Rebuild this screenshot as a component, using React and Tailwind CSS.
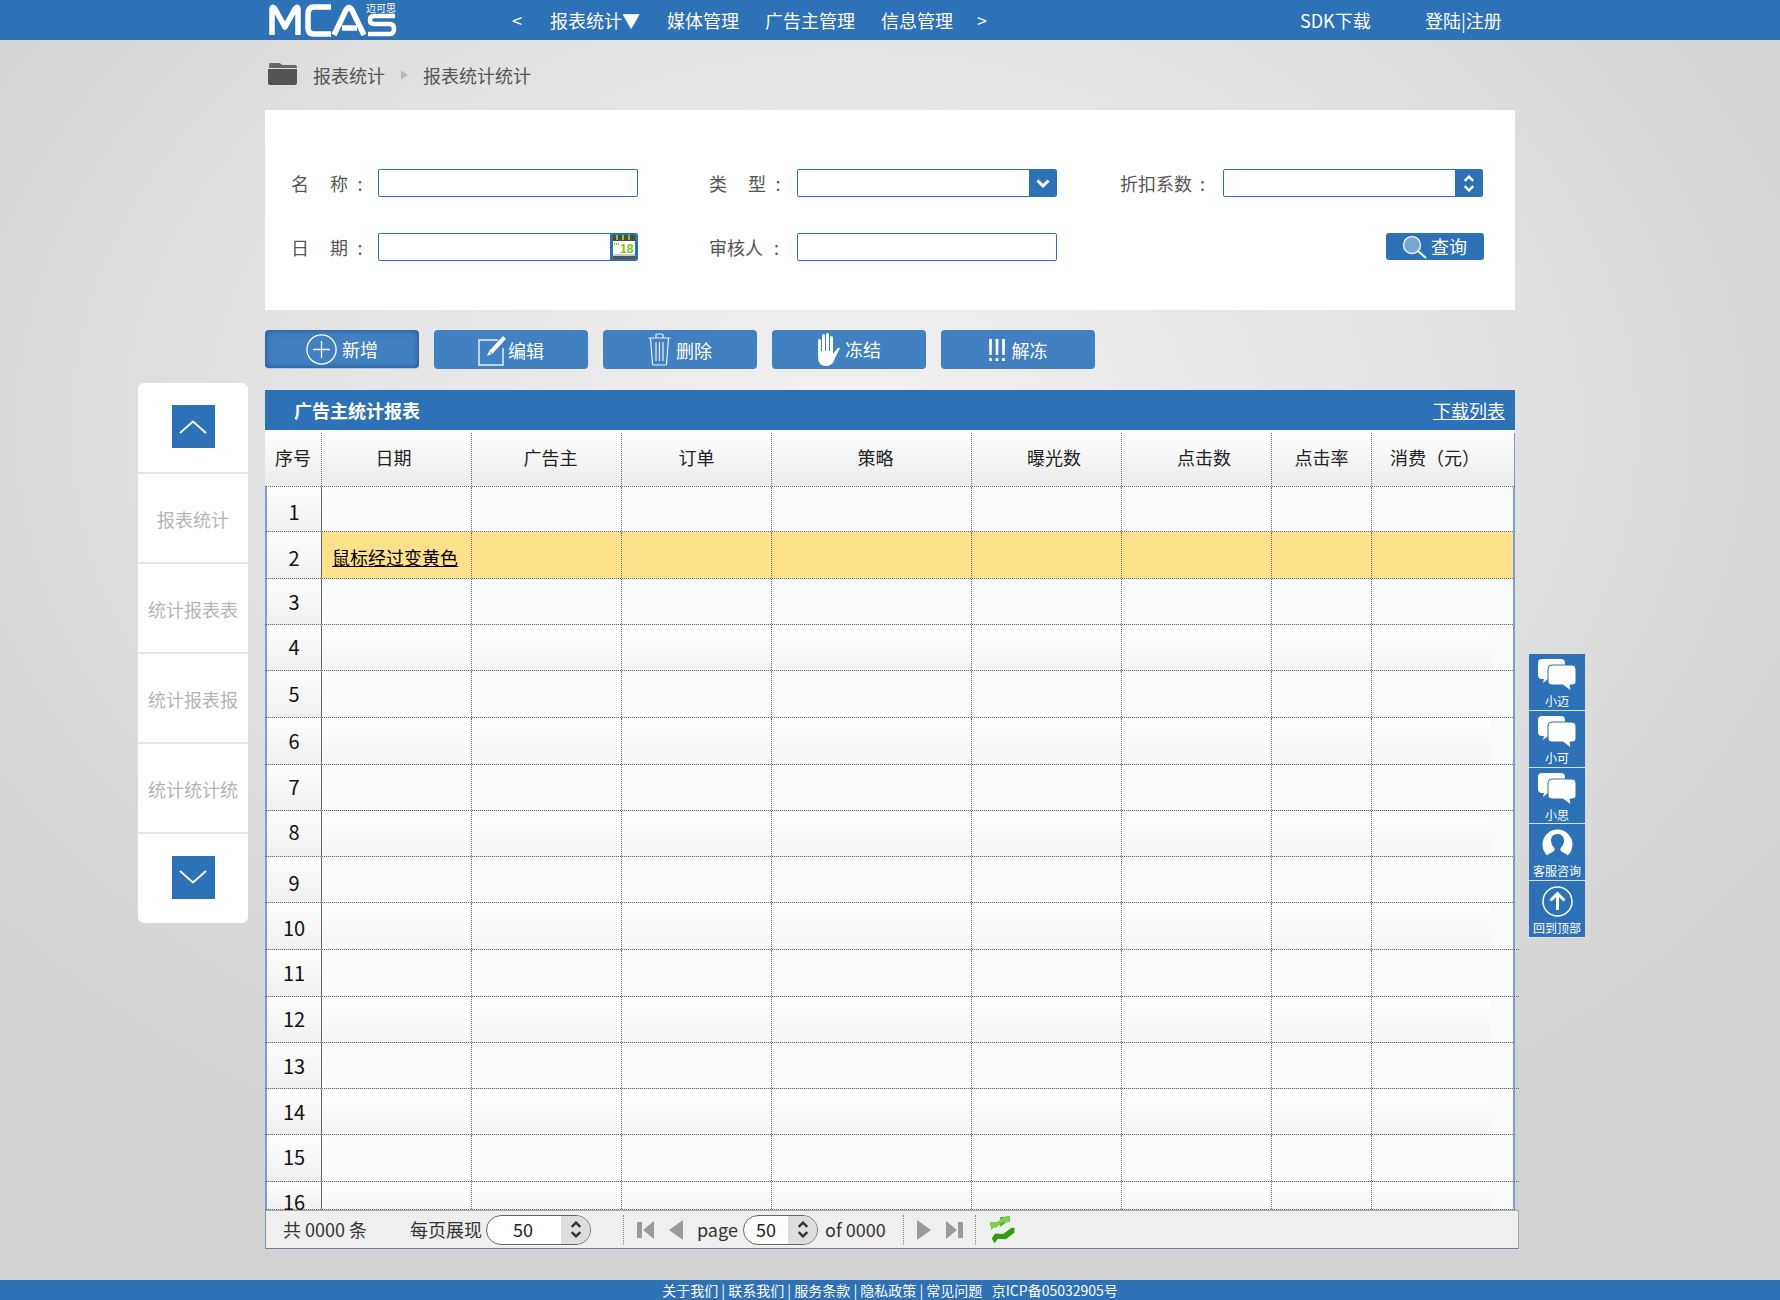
import React from "react";

const FONT = "font-['Noto_Sans_CJK_SC','Noto_Sans',sans-serif]";

const navItems = [
  ["<", "w-[38px]"],
  ["报表统计▼", "w-[117px]"],
  ["媒体管理", "w-[98px]"],
  ["广告主管理", "w-[116px]"],
  ["信息管理", "w-[96px]"],
  [">", "w-[323px]"],
  ["SDK下载", "w-[125px]"],
  ["登陆|注册", ""],
];

const columns = [
  { label: "序号", w: "w-[57px]", head: "" },
  { label: "日期", w: "w-[150px]", head: "pr-[6px]" },
  { label: "广告主", w: "w-[150px]", head: "pl-[8px]" },
  { label: "订单", w: "w-[150px]", head: "" },
  { label: "策略", w: "w-[200px]", head: "pl-[8px]" },
  { label: "曝光数", w: "w-[150px]", head: "pl-[15px]" },
  { label: "点击数", w: "w-[150px]", head: "pl-[15px]" },
  { label: "点击率", w: "w-[100px]", head: "" },
  { label: "消费（元）", w: "w-[143px]", head: "pr-[16px]" },
];

// row heights and digit offsets follow the uneven rows of the picture
const rows = [
  { n: 1, h: "h-[45px]", pt: "pt-[13px]" },
  { n: 2, h: "h-[47px]", pt: "pt-[14px]" },
  { n: 3, h: "h-[46px]", pt: "pt-[11px]" },
  { n: 4, h: "h-[46px]", pt: "pt-[10px]" },
  { n: 5, h: "h-[47px]", pt: "pt-[11px]" },
  { n: 6, h: "h-[47px]", pt: "pt-[11px]" },
  { n: 7, h: "h-[46px]", pt: "pt-[10px]" },
  { n: 8, h: "h-[46px]", pt: "pt-[9px]" },
  { n: 9, h: "h-[46px]", pt: "pt-[14px]" },
  { n: 10, h: "h-[47px]", pt: "pt-[13px]", wide: true },
  { n: 11, h: "h-[47px]", pt: "pt-[11px]", wide: true },
  { n: 12, h: "h-[46px]", pt: "pt-[10px]" },
  { n: 13, h: "h-[46px]", pt: "pt-[11px]", wide: true },
  { n: 14, h: "h-[46px]", pt: "pt-[11px]" },
  { n: 15, h: "h-[47px]", pt: "pt-[10px]", wide: true },
  { n: 16, h: "h-[28px]", pt: "pt-[8px]" },
];

function Chevron({ up, className }) {
  return (
    <svg viewBox="0 0 14 9" className={className} fill="none" stroke="currentColor" strokeWidth="3">
      <path d={up ? "M1.5 7.5 7 2l5.5 5.5" : "M1.5 1.5 7 7l5.5-5.5"} />
    </svg>
  );
}

function UpDown({ className }) {
  return (
    <div className={"flex flex-col items-center gap-[3px] " + className}>
      <Chevron up className="w-[12px] h-[7px]" />
      <Chevron className="w-[12px] h-[7px]" />
    </div>
  );
}

function Logo() {
  return (
    <div className="relative w-[129px] h-[34px]">
      <svg viewBox="0 0 129 34" className="w-[129px] h-[34px]" fill="none" stroke="#fff" strokeWidth="5.5" strokeLinejoin="round">
        <path d="M4 32V7Q4 2 7 6L17 24 27 6Q30 2 30 7V32" />
        <path d="M63 4H46Q40 4 40 11V25Q40 31 46 31H63" />
        <path d="M66 32 78 7Q81 2 84 7L96 32M74 25H89" />
        <path d="M127 13H106Q102 13 102 17 102 21 106 21H122Q126 21 126 26 126 31 122 31H100" strokeWidth="4.5" />
      </svg>
      <span className="absolute left-[98px] top-[-1px] text-[10px] leading-[11px] text-white">迈可思</span>
    </div>
  );
}

function Header() {
  return (
    <header className="h-[40px] bg-[#2d71b7] flex items-center pl-[268px] text-white text-[18px]">
      <Logo />
      <div className="flex items-center ml-[115px]">
        {navItems.map(([text, w]) => (
          <span key={text} className={w}>{text}</span>
        ))}
      </div>
    </header>
  );
}

function Breadcrumb() {
  return (
    <div className="h-[70px] flex items-center pl-[3px] text-[18px] text-[#555]">
      <svg viewBox="0 0 29 24" className="w-[29px] h-[24px] -mt-[4px]">
        <path d="M1 4q0-2 2-2h8q1 0 2 1l1 1h13q2 0 2 2v1H1z" fill="#666" />
        <path d="M0 8h29v14q0 2-2 2H2q-2 0-2-2z" fill="#555" />
      </svg>
      <span className="ml-[16px]">报表统计</span>
      <span className="ml-[16px] w-0 h-0 border-y-[5px] border-y-transparent border-l-[7px] border-l-[#bbb]" />
      <span className="ml-[15px]">报表统计统计</span>
    </div>
  );
}

function CalendarIcon() {
  return (
    <svg viewBox="0 0 22 24" className="w-[22px] h-[24px]">
      <rect x="0" y="0" width="22" height="24" rx="1" fill="#fff" />
      <rect x="0" y="0" width="22" height="6" fill="#4c4c3a" />
      <path d="M3 0h2v5H3zM9 0h2v5H9zM15 0h2v5h-2z" fill="#8ac926" />
      <rect x="0" y="21" width="22" height="3" fill="#555" />
      <rect x="0" y="19" width="22" height="2" fill="#ccc" />
      <path d="M1 8h1v2H1zM3 8h1v2H3zM5 8h1v2H5z" fill="#7ac70c" />
      <text x="7" y="18" fontSize="12" fontWeight="700" fill="#74c80a" fontFamily="Liberation Sans">18</text>
    </svg>
  );
}

function Field({ w, slot }) {
  return (
    <div className={w + " h-[28px] border border-[#2d71b7] rounded-[2px] bg-white flex justify-end overflow-hidden"}>
      {slot && <div className="w-[27px] bg-[#2d71b7] text-white flex items-center justify-center">{slot}</div>}
    </div>
  );
}

function Label({ text, w, colon }) {
  return (
    <span className={w + " text-[18px] text-[#555] whitespace-pre"}>
      {text}
      <span className={colon}>:</span>
    </span>
  );
}

function FilterForm() {
  return (
    <div className="h-[200px] bg-white pt-[59px] pl-[26px] flex flex-col gap-[36px]">
      <div className="flex items-center">
        <Label text="名　称" w="w-[87px] tracking-[1.5px]" colon="ml-[8px]" />
        <Field w="w-[260px]" />
        <div className="w-[71px]" />
        <Label text="类　型" w="w-[88px] tracking-[1.5px]" colon="ml-[8px]" />
        <Field w="w-[260px]" slot={<Chevron className="w-[14px] h-[9px]" />} />
        <div className="w-[63px]" />
        <Label text="折扣系数" w="w-[103px]" colon="ml-[8px]" />
        <Field w="w-[260px]" slot={<UpDown />} />
      </div>
      <div className="flex items-center">
        <Label text="日　期" w="w-[87px] tracking-[1.5px]" colon="ml-[8px]" />
        <Field w="w-[260px]" slot={<CalendarIcon />} />
        <div className="w-[71px]" />
        <Label text="审核人" w="w-[88px]" colon="ml-[11px]" />
        <Field w="w-[260px]" />
        <button className="ml-[329px] w-[98px] h-[27px] -mt-[1px] rounded-[3px] bg-[#2d71b7] text-white text-[18px] flex items-center pl-[16px] gap-[3px]">
          <svg viewBox="0 0 26 24" className="w-[26px] h-[24px]">
            <circle cx="10" cy="10" r="8.5" fill="#79a5d4" stroke="#e8f0f8" strokeWidth="1.5" />
            <path d="M16 16l8 7" stroke="#fff" strokeWidth="2" />
          </svg>
          查询
        </button>
      </div>
    </div>
  );
}

function ActionButton({ active, icon, text, gap, pt }) {
  return (
    <button
      className={
        "w-[154px] h-[39px] rounded-[4px] bg-[#4180c1] text-white text-[18px] flex items-center justify-center " +
        gap + " " +
        (active ? "shadow-[inset_0_0_6px_#1f4f8f] border-b border-white/60" : "")
      }
    >
      {icon}
      <span className={pt}>{text}</span>
    </button>
  );
}

function Toolbar() {
  return (
    <div className="mt-[20px] flex gap-[15px]">
      <ActionButton
        active
        text="新增"
        gap="gap-[5px]"
        pt="pt-[1px]"
        icon={
          <svg viewBox="0 0 31 31" className="w-[31px] h-[31px]" fill="none" stroke="#fff" strokeWidth="1.3">
            <circle cx="15.5" cy="15.5" r="14.6" />
            <path d="M15.5 7v17M7 15.5h17" />
          </svg>
        }
      />
      <ActionButton
        text="编辑"
        gap="gap-0"
        pt="pt-[1px]"
        icon={
          <svg viewBox="0 0 30 32" className="w-[30px] h-[32px]" fill="none" stroke="#e8f0f8">
            <path d="M20 6H1v25h24V14" strokeWidth="1.5" />
            <path d="M9 22l2-5L25 2l3 3-14 15z" fill="#fff" stroke="none" />
            <path d="M11.5 17.5l3 3" stroke="#4180c1" />
          </svg>
        }
      />
      <ActionButton
        text="删除"
        gap="gap-[5px]"
        pt="pt-[1px]"
        icon={
          <svg viewBox="0 0 23 33" className="w-[23px] h-[33px]" fill="none" stroke="#e8f0f8" strokeWidth="1.2">
            <path d="M.5 5h22M8 5V2q0-1 1-1h5q1 0 1 1v3M2.5 5l2 26q0 1 1 1h12q1 0 1-1l2-26M8 9v19M11.5 9v19M15 9v19" />
          </svg>
        }
      />
      <ActionButton
        text="冻结"
        gap="gap-[5px]"
        pt="-mt-[1px]"
        icon={
          <svg viewBox="0 0 23 33" className="w-[23px] h-[33px]" fill="#fff">
            <rect x="1" y="6" width="3" height="16" rx="1.5" />
            <rect x="5" y="1" width="3" height="20" rx="1.5" />
            <rect x="9" y="0" width="3" height="21" rx="1.5" />
            <rect x="13" y="3" width="3" height="18" rx="1.5" />
            <path d="M1 18h15v3l4-5q2-2 3-1l-5 10q-2 8-9 8-8 0-8-9z" />
          </svg>
        }
      />
      <ActionButton
        text="解冻"
        gap="gap-[7px]"
        pt="pt-[1px]"
        icon={
          <svg viewBox="0 0 16 22" className="w-[16px] h-[22px]" fill="#fff">
            <path d="M0 0h3l-.3 16H.4zM6.500 0h3l-.3 16H6.800zM13 0h3l-.3 16h-2.300zM.2 19h2.600v3H.2zM6.700 19h2.600v3H6.700zM13.200 19h2.600v3h-2.600z" />
          </svg>
        }
      />
    </div>
  );
}

function TableHead() {
  return (
    <div className="flex h-[57px] w-[1250px] bg-gradient-to-b from-white to-[#ebebeb] border-b border-dotted border-[#666]">
      {columns.map((c, i) => (
        <div
          key={c.label}
          className={
            c.w + " mt-[3px] flex items-center justify-center pb-[5px] text-[18px] text-[#222] border-dotted border-[#666] " +
            c.head + " " +
            (i < 8 ? "border-r" : "border-r border-solid border-r-[#7a9fd6]")
          }
        >
          {c.label}
        </div>
      ))}
    </div>
  );
}

function TableRow({ row }) {
  const hover = row.n === 2;
  const even = row.n % 2 === 0 && !hover;
  return (
    <div className={row.h + " flex border-b border-dotted border-[#666] " + (row.wide ? "w-[1254px]" : "w-[1250px]")}>
      {columns.map((c, i) => {
        if (i === 0) {
          return (
            <div
              key={c.label}
              className={c.w + " " + row.pt + " text-center text-[20px] leading-[24px] text-[#111] bg-gradient-to-b from-white to-[#efefef] border-l-2 border-l-[#7a9fd6] border-r border-r-[#666] border-r-dotted"}
            >
              {row.n}
            </div>
          );
        }
        return (
          <div
            key={c.label}
            className={
              c.w + " border-r " +
              (i < 8 ? "border-dotted border-[#666] " : "border-r-2 border-solid border-[#7a9fd6] ") +
              (hover ? "bg-[#fee18a] " : even && i < 8 ? "bg-gradient-to-b from-white to-[#f6f6f6] " : "bg-[#fafbfd] ")
            }
          >
            {hover && i === 1 && (
              <a href="#" className="block ml-[10px] mt-[13px] text-[18px] leading-[24px] text-black underline whitespace-nowrap">
                鼠标经过变黄色
              </a>
            )}
            {even && i === 8 && <div className="w-[119px] h-full bg-gradient-to-b from-white to-[#f6f6f6]" />}
          </div>
        );
      })}
    </div>
  );
}

function DataTable() {
  return (
    <div className="mt-[21px] w-[1250px]">
      <div className="h-[40px] bg-[#2d71b7] flex items-center justify-between pl-[29px] pr-[10px] text-white text-[18px]">
        <span className="font-bold">广告主统计报表</span>
        <a href="#" className="underline">下载列表</a>
      </div>
      <div className="h-[780px] w-[1254px] overflow-hidden">
        <TableHead />
        {rows.map((row) => (
          <TableRow key={row.n} row={row} />
        ))}
      </div>
    </div>
  );
}

function Spinner({ value, w, valueW }) {
  return (
    <div className={w + " h-[30px] rounded-full border border-[#666] bg-white overflow-hidden flex text-[18px] text-[#222]"}>
      <span className={valueW + " flex-1 flex items-center justify-center"}>{value}</span>
      <span className="w-[29px] bg-[#dedede] flex items-center justify-center text-[#333]">
        <UpDown />
      </span>
    </div>
  );
}

function Pager() {
  return (
    <div className="w-[1254px] h-[39px] bg-[#efefef] border border-[#a9a9a9] border-b-[#74808e] border-l-[#8296ad] flex items-center pl-[17px] text-[18px] text-[#333]">
      <span className="w-[127px]">共 0000 条</span>
      <span className="w-[76px]">每页展现</span>
      <Spinner value="50" w="w-[105px]" valueW="pr-[2px]" />
      <span className="ml-[32px] h-[30px] border-l border-dotted border-[#888]" />
      <svg viewBox="0 0 17 30" className="ml-[13px] w-[17px] h-[30px]" fill="#9a9a9a">
        <path d="M0 7h5v16H0zM17 6v18L6 15z" />
      </svg>
      <svg viewBox="0 0 14 30" className="ml-[15px] w-[14px] h-[30px]" fill="#9a9a9a">
        <path d="M14 5v20L0 15z" />
      </svg>
      <span className="ml-[14px] w-[46px]">page</span>
      <Spinner value="50" w="w-[75px]" valueW="" />
      <span className="ml-[7px] w-[65px]">of 0000</span>
      <span className="ml-[13px] h-[30px] border-l border-dotted border-[#888]" />
      <svg viewBox="0 0 14 30" className="ml-[13px] w-[14px] h-[30px]" fill="#9a9a9a">
        <path d="M0 5v20l14-10z" />
      </svg>
      <svg viewBox="0 0 17 30" className="ml-[15px] w-[17px] h-[30px]" fill="#9a9a9a">
        <path d="M12 7h5v16h-5zM0 6v18l11-9z" />
      </svg>
      <span className="ml-[12px] h-[30px] border-l border-dotted border-[#888]" />
      <svg viewBox="0 0 26 28" className="ml-[13px] w-[26px] h-[28px]">
        <path d="M2 14Q2 6 11 6V1l3 0 0 0 8 3-3 1-8 6V9Q6 9 2 14z" fill="#55b52a" />
        <path d="M1 6h7L17 0h4v6h-8l-6 6-6-2z" fill="#7ed04a" />
        <path d="M6 18h8l8-7 3 0v5l-8 7h-8l-3 5-3-5z" fill="#2f9e12" transform="rotate(4 13 20)" />
      </svg>
    </div>
  );
}

function SideMenu() {
  const labels = ["报表统计", "统计报表表", "统计报表报", "统计统计统"];
  return (
    <aside className="mt-[343px] w-[110px] h-[540px] bg-white rounded-[6px] flex flex-col items-stretch">
      <div className="h-[89px] flex items-center justify-center pb-[2px]">
        <div className="w-[43px] h-[43px] bg-[#2d71b7] flex items-center justify-center text-white">
          <svg viewBox="0 0 28 14" className="w-[28px] h-[14px]" fill="none" stroke="currentColor" strokeWidth="1.8">
            <path d="M1 13 14 1.500 27 13" />
          </svg>
        </div>
      </div>
      {labels.map((t) => (
        <div key={t} className="h-[90px] border-t-2 border-[#e5e5e5] flex items-center justify-center pt-[3px] text-[18px] text-[#b5b5b5]">
          {t}
        </div>
      ))}
      <div className="flex-1 border-t-2 border-[#e5e5e5] flex items-center justify-center pb-[3px]">
        <div className="w-[43px] h-[43px] bg-[#2d71b7] flex items-center justify-center text-white">
          <svg viewBox="0 0 28 14" className="w-[28px] h-[14px]" fill="none" stroke="currentColor" strokeWidth="1.8">
            <path d="M1 1 14 12.500 27 1" />
          </svg>
        </div>
      </div>
    </aside>
  );
}

function ChatIcon() {
  return (
    <svg viewBox="0 0 38 32" className="w-[38px] h-[32px]">
      <path d="M4 0h19q4 0 4 4v12q0 4-4 4H10l-5 4 1-4H4q-4 0-4-4V4q0-4 4-4z" fill="#fff" transform="translate(0 0)" />
      <path d="M14 6h20q4 0 4 4v13q0 3-4 3h-2l1 6-8-6H14q-4 0-4-3V10q0-4 4-4z" fill="#fff" stroke="#2d71b7" strokeWidth="1" />
    </svg>
  );
}

function FloatItem({ icon, text }) {
  return (
    <div className="h-[57px] bg-[#2d71b7] border-b border-white/80 flex flex-col items-center text-white text-[12px] leading-[14px]">
      <div className="h-[40px] pt-[5px] flex justify-center">{icon}</div>
      <span>{text}</span>
    </div>
  );
}

function FloatBar() {
  return (
    <aside className="ml-[14px] mt-[614px] w-[56px] h-[284px] flex flex-col overflow-hidden">
      <FloatItem text="小迈" icon={<ChatIcon />} />
      <FloatItem text="小可" icon={<ChatIcon />} />
      <FloatItem text="小思" icon={<ChatIcon />} />
      <FloatItem
        text="客服咨询"
        icon={
          <svg viewBox="0 0 31 31" className="w-[31px] h-[31px]">
            <circle cx="15.500" cy="15.500" r="15" fill="#fff" />
            <path d="M15.500 5c4.500 0 6.500 3 6.500 6.500 0 3-1.500 6-3.500 7.500v2c0 2 5 3 7.500 5.500a15 15 0 0 1-21 0c2.500-2.500 7.500-3.500 7.500-5.500v-2C10.500 17.500 9 14.500 9 11.500 9 8 11 5 15.500 5z" fill="#2d71b7" />
          </svg>
        }
      />
      <FloatItem
        text="回到顶部"
        icon={
          <svg viewBox="0 0 31 31" className="w-[31px] h-[31px]" fill="none" stroke="#fff">
            <circle cx="15.500" cy="15.500" r="14.500" strokeWidth="1.500" />
            <path d="M15.500 24V8M8.500 14.500l7-7 7 7" strokeWidth="3" />
          </svg>
        }
      />
    </aside>
  );
}

export default function App() {
  return (
    <div className={FONT + " w-[1780px] h-[1300px] overflow-hidden flex flex-col bg-[radial-gradient(ellipse_62%_62%_at_48%_33%,#f1f1f1_0%,#e2e2e2_55%,#d2d2d2_100%)]"}>
      <Header />
      <div className="flex-1 flex pl-[138px]">
        <SideMenu />
        <main className="ml-[17px] w-[1250px]">
          <Breadcrumb />
          <FilterForm />
          <Toolbar />
          <DataTable />
          <Pager />
        </main>
        <FloatBar />
      </div>
      <footer className="h-[20px] bg-[#2d71b7] text-white text-[14px] leading-[20px] flex justify-center whitespace-pre">
        关于我们 | 联系我们 | 服务条款 | 隐私政策 | 常见问题   京ICP备05032905号
      </footer>
    </div>
  );
}
